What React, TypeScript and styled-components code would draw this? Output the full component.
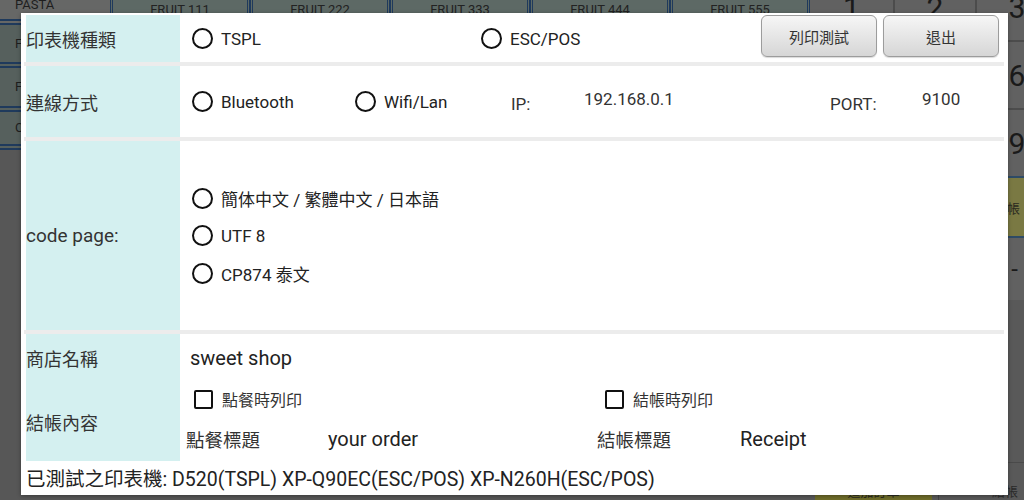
import styled, { createGlobalStyle } from "styled-components"

const GlobalStyle = createGlobalStyle`
  html, body {
    margin: 0;
    height: 100%;
  }
  body {
    font-family: Roboto, "Noto Sans CJK TC", sans-serif;
    background: #575757;
    overflow: hidden;
  }
`

const fruits = ["FRUIT 111", "FRUIT 222", "FRUIT 333", "FRUIT 444", "FRUIT 555"]
const sideItems = [
  { name: "PASTA", h: 19 },
  { name: "FRUIT", h: 37 },
  { name: "FRIES", h: 38 },
  { name: "COFFEE", h: 32 },
]
const keys = ["1", "2", "3", "4", "5", "6", "7", "8", "9"]

const App = () => {
  return (
    <Screen>
      <GlobalStyle />
      <SideMenu>
        {sideItems.map((item, i) => (
          <SideItem key={item.name} $h={item.h} $first={i === 0}>
            {item.name}
          </SideItem>
        ))}
      </SideMenu>
      <Center>
        <FruitBar>
          {fruits.map((f) => (
            <FruitButton key={f}>{f}</FruitButton>
          ))}
        </FruitBar>
      </Center>
      <RightPanel>
        <Keypad>
          {keys.map((k) => (
            <Key key={k}>{k}</Key>
          ))}
        </Keypad>
        <HoldBand>暫存 後結帳</HoldBand>
        <MinusBand>-</MinusBand>
        <Filler />
        <BottomBar>
          <OliveButton>追加訂單</OliveButton>
          <BottomText>結帳</BottomText>
        </BottomBar>
      </RightPanel>

      <Dialog>
        <Row $h={47}>
          <Label>印表機種類</Label>
          <Content>
            <Option $w={289}>
              <Radio />
              TSPL
            </Option>
            <Option $grow>
              <Radio />
              ESC/POS
            </Option>
            <Buttons>
              <Button>列印測試</Button>
              <Button>退出</Button>
            </Buttons>
          </Content>
        </Row>
        <Divider />
        <Row $h={71}>
          <Label>連線方式</Label>
          <Content>
            <Option $w={163}>
              <Radio />
              Bluetooth
            </Option>
            <Option $w={156}>
              <Radio />
              Wifi/Lan
            </Option>
            <FieldLabel $w={73}>IP:</FieldLabel>
            <FieldValue $w={246}>192.168.0.1</FieldValue>
            <FieldLabel $w={92}>PORT:</FieldLabel>
            <FieldValue>9100</FieldValue>
          </Content>
        </Row>
        <Divider />
        <Row $h={189}>
          <Label $latin>code page:</Label>
          <RadioList>
            <Option>
              <Radio />
              簡体中文 / 繁體中文 / 日本語
            </Option>
            <Option>
              <Radio />
              UTF 8
            </Option>
            <Option>
              <Radio />
              CP874 泰文
            </Option>
          </RadioList>
        </Row>
        <Divider />
        <ShopRow>
          <Label>商店名稱</Label>
          <ShopName>sweet shop</ShopName>
          <Label>結帳內容</Label>
          <ReceiptBox>
            <CheckLine>
              <CheckOption $w={411}>
                <Check />
                點餐時列印
              </CheckOption>
              <CheckOption>
                <Check />
                結帳時列印
              </CheckOption>
            </CheckLine>
            <TitleLine>
              <TitleLabel>點餐標題</TitleLabel>
              <TitleValue>your order</TitleValue>
              <TitleLabel>結帳標題</TitleLabel>
              <TitleValue>Receipt</TitleValue>
            </TitleLine>
          </ReceiptBox>
        </ShopRow>
        <Footer>已測試之印表機: D520(TSPL) XP-Q90EC(ESC/POS) XP-N260H(ESC/POS)</Footer>
      </Dialog>
    </Screen>
  )
}

export default App

/* ---------- dimmed POS screen behind the dialog ---------- */

const Screen = styled.div`
  position: relative;
  width: 1024px;
  height: 500px;
  overflow: hidden;
  display: grid;
  grid-template-columns: 110px 700px 214px;
  background: #575757;
`

const SideMenu = styled.div`
  display: flex;
  flex-direction: column;
`

interface SideItemProps {
  $h: number
  $first?: boolean
}

const SideItem = styled.div<SideItemProps>`
  height: ${(p) => p.$h}px;
  flex: none;
  padding-left: 15px;
  background: ${(p) => (p.$first ? "#666766" : "#56605d")};
  border-bottom: 6px double #1f3a5c;
  font-size: 13px;
  line-height: ${(p) => (p.$first ? "10px" : `${p.$h}px`)};
  color: #1e1e1e;
  overflow: hidden;
`

const Center = styled.div`
  display: flex;
  flex-direction: column;
`

const FruitBar = styled.div`
  display: flex;
  height: 24px;
`

const FruitButton = styled.div`
  width: 140px;
  box-sizing: border-box;
  border: 3px double #1f3a5c;
  border-top: none;
  background: #5d6965;
  color: #222;
  font-size: 13px;
  text-align: center;
  line-height: 20px;
`

const RightPanel = styled.div`
  display: flex;
  flex-direction: column;
  background: #595959;
`

const Keypad = styled.div`
  display: grid;
  grid-template-columns: 83px 80px 80px;
  grid-auto-rows: 66px;
  gap: 2px;
  margin-top: -26px;
  background: #4c4c4c;
`

const Key = styled.div`
  background: #616161;
  color: #1a1a1a;
  font-size: 30px;
  display: flex;
  align-items: center;
  justify-content: center;
`

const HoldBand = styled.div`
  height: 58px;
  flex: none;
  border-top: 2px solid #2e4b66;
  border-bottom: 2px solid #2e4b66;
  background: #7a7943;
  color: #2a2a20;
  font-size: 13px;
  display: flex;
  align-items: center;
  justify-content: flex-end;
  padding-right: 4px;
`

const MinusBand = styled.div`
  height: 62px;
  flex: none;
  background: #616161;
  color: #1a1a1a;
  font-size: 24px;
  display: flex;
  align-items: center;
  justify-content: flex-end;
  padding-right: 6px;
`

const Filler = styled.div`
  flex: 1;
  border-bottom: 1px solid #4a4a4a;
`

const BottomBar = styled.div`
  height: 37px;
  flex: none;
  display: flex;
  align-items: stretch;
  padding-left: 5px;
  gap: 6px;
`

const OliveButton = styled.div`
  width: 117px;
  background: #6f6d2a;
  color: #2a2a20;
  font-size: 13px;
  display: flex;
  align-items: flex-end;
  justify-content: center;
`

const BottomText = styled.div`
  flex: 1;
  border-left: 1px solid #444;
  color: #2a2a2a;
  font-size: 13px;
  display: flex;
  align-items: flex-end;
  justify-content: flex-end;
  padding-right: 6px;
`

/* ---------- printer settings dialog ---------- */

const Dialog = styled.div`
  position: absolute;
  left: 21px;
  top: 13px;
  width: 987px;
  height: 482px;
  box-sizing: border-box;
  padding: 2px 4px 0 3px;
  background: #fff;
  display: flex;
  flex-direction: column;
  box-shadow: 0 1px 4px rgba(0, 0, 0, 0.35);
`

const Divider = styled.div`
  height: 4px;
  flex: none;
  background: #ececec;
`

interface RowProps {
  $h: number
}

const Row = styled.div<RowProps>`
  height: ${(p) => p.$h}px;
  flex: none;
  margin-left: 2px;
  display: grid;
  grid-template-columns: 154px 1fr;
`

const Label = styled.div<{ $latin?: boolean }>`
  background: #d4f0f0;
  display: flex;
  align-items: center;
  font-size: ${(p) => (p.$latin ? "19px" : "18px")};
  color: #333;
`

const Content = styled.div`
  display: flex;
  align-items: center;
  padding-left: 12px;
  padding-right: 5px;
`

interface OptionProps {
  $w?: number
  $grow?: boolean
}

const Option = styled.div<OptionProps>`
  display: flex;
  align-items: center;
  gap: 8px;
  width: ${(p) => (p.$w ? `${p.$w}px` : "auto")};
  flex: ${(p) => (p.$grow ? "1" : "none")};
  font-size: 17px;
  color: #222;
`

const Radio = styled.span`
  width: 17px;
  height: 17px;
  flex: none;
  border: 2px solid #111;
  border-radius: 50%;
`

const Buttons = styled.div`
  align-self: flex-start;
  display: flex;
  gap: 6px;
`

const Button = styled.button`
  width: 116px;
  height: 42px;
  border: 1px solid #9c9c9c;
  border-radius: 6px;
  background: linear-gradient(#f6f6f6, #d6d6d6);
  font-family: Roboto, "Noto Sans CJK TC", sans-serif;
  font-size: 15px;
  color: #333;
  box-shadow: 0 1px 1px rgba(0, 0, 0, 0.15);
`

interface FieldProps {
  $w?: number
}

const FieldLabel = styled.div<FieldProps>`
  width: ${(p) => (p.$w ? `${p.$w}px` : "auto")};
  flex: none;
  padding-top: 4px;
  font-size: 17px;
  color: #333;
`

const FieldValue = styled.div<FieldProps>`
  width: ${(p) => (p.$w ? `${p.$w}px` : "auto")};
  flex: none;
  padding-bottom: 6px;
  font-size: 17px;
  color: #333;
`

const RadioList = styled.div`
  display: flex;
  flex-direction: column;
  justify-content: center;
  gap: 14.5px;
  padding-left: 12px;
`

const ShopRow = styled.div`
  height: 127px;
  flex: none;
  margin-left: 2px;
  display: grid;
  grid-template-columns: 154px 1fr;
  grid-template-rows: 48px 1fr;
`

const ShopName = styled.div`
  display: flex;
  align-items: center;
  padding-left: 10px;
  font-size: 20px;
  color: #222;
`

const ReceiptBox = styled.div`
  display: grid;
  grid-template-rows: 34px 1fr;
`

const CheckLine = styled.div`
  display: flex;
  align-items: center;
  padding-left: 14px;
`

const CheckOption = styled.div<FieldProps>`
  display: flex;
  align-items: center;
  gap: 9px;
  width: ${(p) => (p.$w ? `${p.$w}px` : "auto")};
  flex: none;
  font-size: 16px;
  color: #333;
`

const Check = styled.span`
  width: 15px;
  height: 15px;
  border: 2px solid #111;
  border-radius: 2px;
`

const TitleLine = styled.div`
  display: grid;
  grid-template-columns: 142px 269px 143px 1fr;
  align-items: center;
  padding-left: 6px;
`

const TitleLabel = styled.div`
  font-size: 18.5px;
  color: #333;
`

const TitleValue = styled.div`
  font-size: 20px;
  color: #222;
`

const Footer = styled.div`
  flex: 1;
  margin-left: 2px;
  display: flex;
  align-items: center;
  padding-bottom: 2px;
  font-size: 19.5px;
  color: #222;
`
